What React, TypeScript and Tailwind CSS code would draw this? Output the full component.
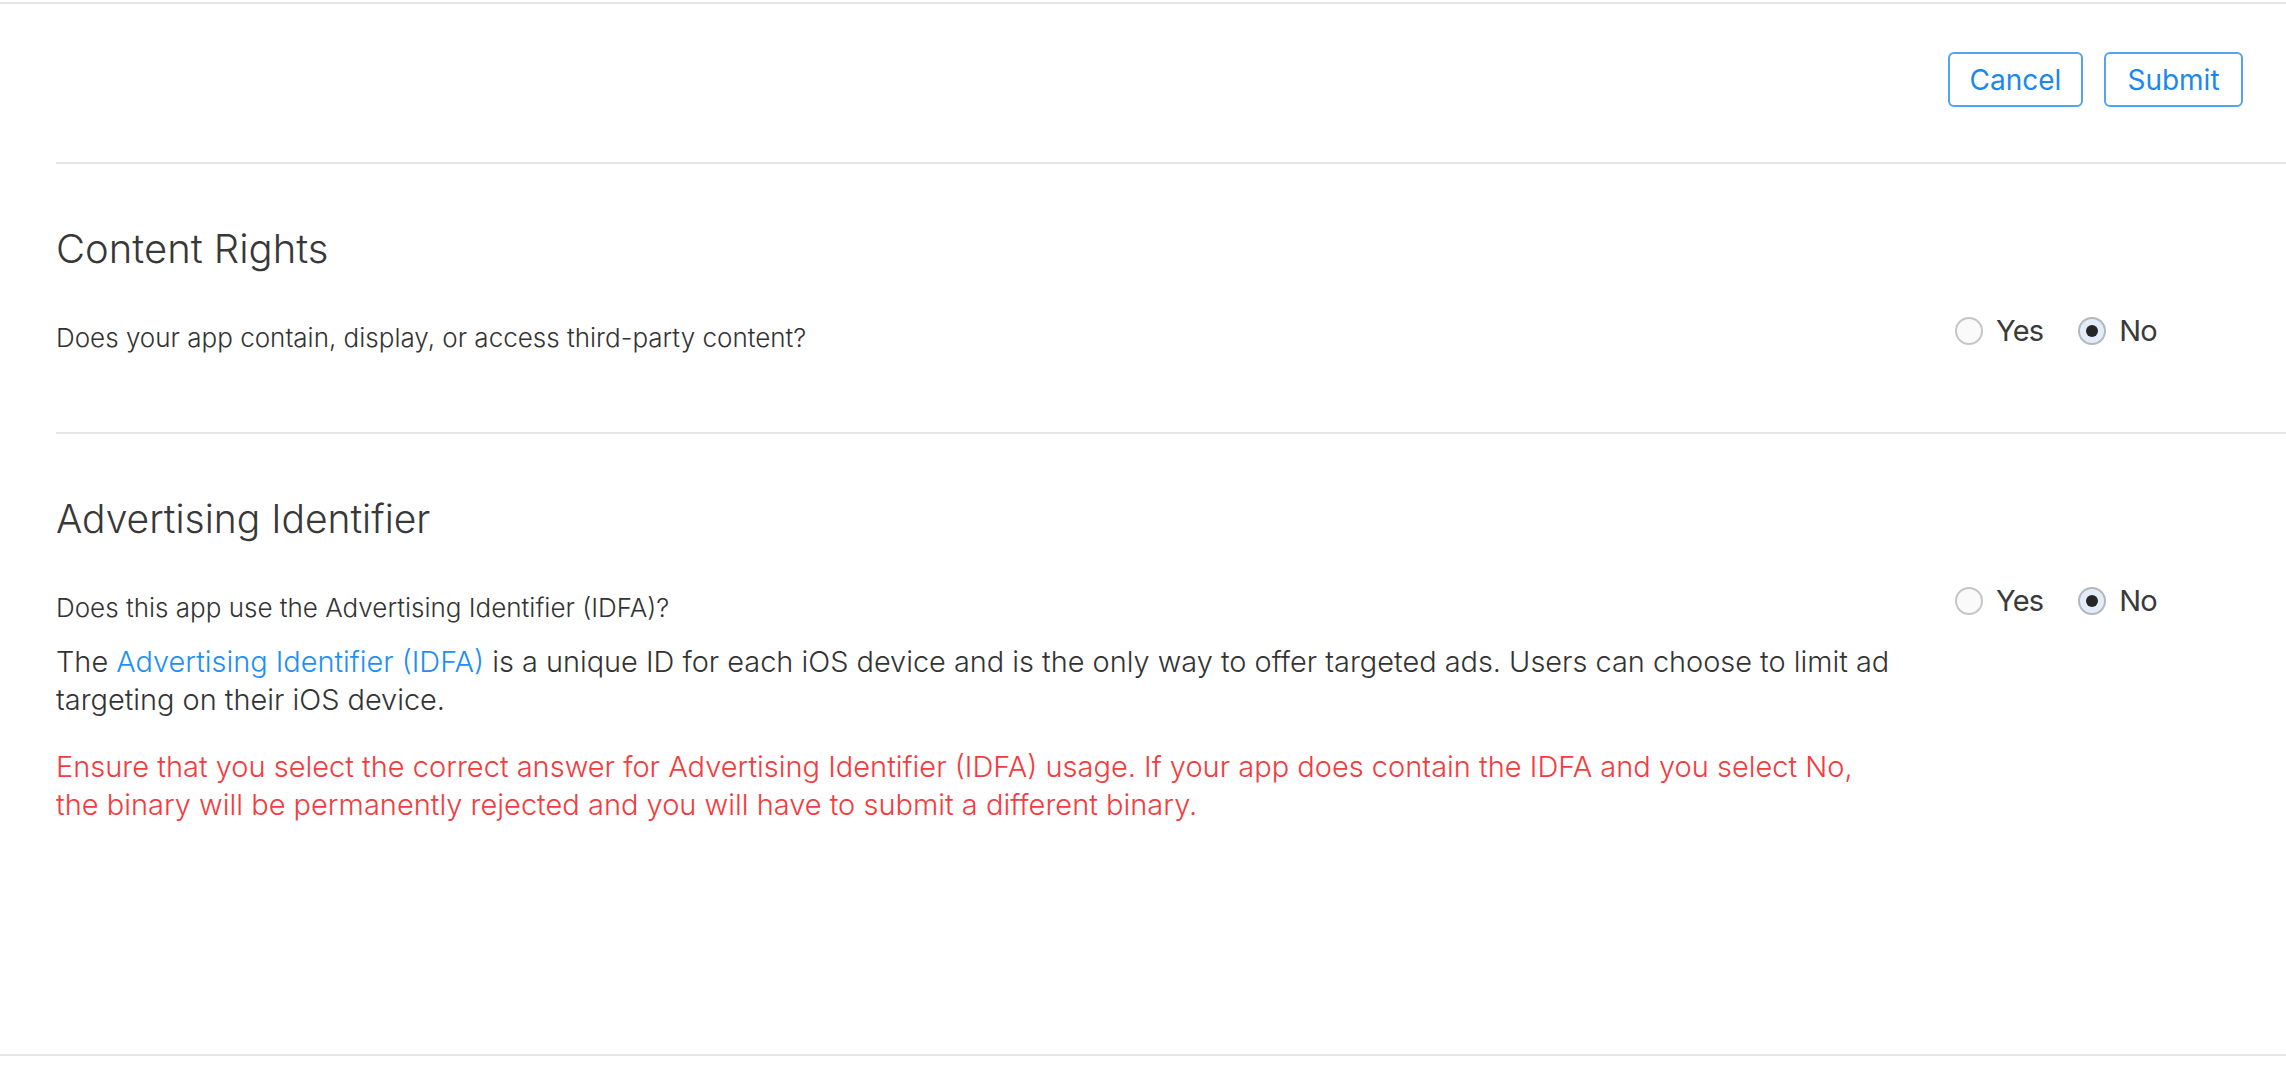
import React from "react";

function Radio({ checked, label }: { checked: boolean; label: string }) {
  return (
    <label className="flex items-center gap-[13px]">
      <span
        className={
          checked
            ? "flex h-[28px] w-[28px] items-center justify-center rounded-full border-2 border-[#b4b8bd] bg-[#e3edfa]"
            : "flex h-[28px] w-[28px] items-center justify-center rounded-full border-2 border-[#c6c6c6] bg-[#fafafa]"
        }
      >
        {checked && <span className="h-[12px] w-[12px] rounded-full bg-[#262626]" />}
      </span>
      <span className="text-[29px] leading-[38px] tracking-[-0.8px] text-[#3a3a3a]">{label}</span>
    </label>
  );
}

function RadioGroup() {
  return (
    <div className="flex w-[331px] shrink-0 items-center gap-[35px]">
      <Radio checked={false} label="Yes" />
      <Radio checked={true} label="No" />
    </div>
  );
}

export default function App() {
  return (
    <div className="flex h-[1068px] w-[2286px] flex-col bg-white font-['Inter','Helvetica_Neue',Arial,sans-serif] text-[#333]">
      <div className="pt-[2px]">
        <div className="h-[2px] bg-[#e5e5e5]" />
      </div>
      <div className="flex flex-1 flex-col pl-[56px]">
        <div className="flex justify-end gap-[21px] pr-[43px] pt-[48px] pb-[55px]">
          <button className="flex h-[55px] w-[135px] items-center justify-center rounded-[6px] border-2 border-[#4fa5f2] text-[28px] text-[#1b88ee]">
            Cancel
          </button>
          <button className="flex h-[55px] w-[139px] items-center justify-center rounded-[6px] border-2 border-[#4fa5f2] text-[28px] text-[#1b88ee]">
            Submit
          </button>
        </div>
        <div className="h-[2px] bg-[#e5e5e5]" />

        <section className="pt-[61px] pb-[75px]">
          <h2 className="text-[40px] leading-[48px] font-light text-[#383838]">Content Rights</h2>
          <div className="mt-[39px] flex items-start">
            <div className="flex-1 pt-[7px] text-[26px] leading-[38px] font-light">
              Does your app contain, display, or access third-party content?
            </div>
            <RadioGroup />
          </div>
        </section>
        <div className="h-[2px] bg-[#e5e5e5]" />

        <section className="pt-[61px]">
          <h2 className="text-[39px] leading-[48px] font-light text-[#383838]">Advertising Identifier</h2>
          <div className="mt-[39px] flex items-start">
            <div className="flex-1 pt-[7px] text-[29px] leading-[38px] font-light">
              <p className="text-[26px]">Does this app use the Advertising Identifier (IDFA)?</p>
              <p className="mt-[16px] text-[28.9px]">
                <span className="block whitespace-nowrap">
                  The <span className="text-[#1f8ef7]">Advertising Identifier (IDFA)</span> is a unique ID for each iOS
                  device and is the only way to offer targeted ads. Users can choose to limit ad
                </span>
                <span className="block whitespace-nowrap">targeting on their iOS device.</span>
              </p>
              <p className="mt-[29px] text-[#f43b3e]">
                <span className="block whitespace-nowrap">
                  Ensure that you select the correct answer for Advertising Identifier (IDFA) usage. If your app does
                  contain the IDFA and you select No,
                </span>
                <span className="block whitespace-nowrap">
                  the binary will be permanently rejected and you will have to submit a different binary.
                </span>
              </p>
            </div>
            <RadioGroup />
          </div>
        </section>
      </div>
      <div className="h-[2px] bg-[#e5e5e5]" />
      <div className="h-[12px]" />
    </div>
  );
}
